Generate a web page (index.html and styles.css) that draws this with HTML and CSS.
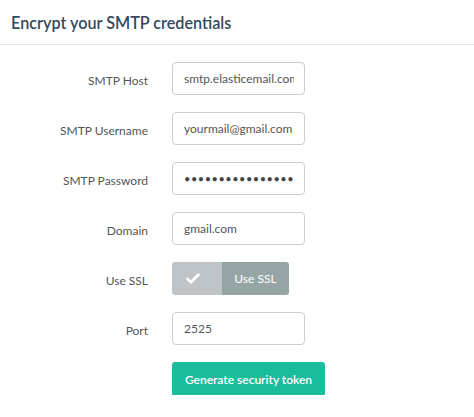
FILE: index.html
```html
<!DOCTYPE html>
<html>
<head>
<meta charset="utf-8">
<link rel="stylesheet" href="styles.css">
</head>
<body>
<div class="header"><h1 class="title">Encrypt your SMTP credentials</h1></div>
<form class="form">
  <div class="row"><label class="label">SMTP Host</label><div class="input"><span class="val">smtp.elasticemail.com</span></div></div>
  <div class="row"><label class="label">SMTP Username</label><div class="input"><span class="val">yourmail@gmail.com</span></div></div>
  <div class="row"><label class="label">SMTP Password</label><div class="input"><span class="val dots">••••••••••••••••</span></div></div>
  <div class="row"><label class="label">Domain</label><div class="input"><span class="val">gmail.com</span></div></div>
  <div class="row"><label class="label">Use SSL</label>
    <div class="toggle">
      <span class="tog-check"><svg width="14" height="11" viewBox="0 0 14 11"><path d="M1.6 6 L5 9.2 L12.4 1.8" fill="none" stroke="#fff" stroke-width="2.8" stroke-linecap="round" stroke-linejoin="round"/></svg></span>
      <span class="tog-text">Use SSL</span>
    </div>
  </div>
  <div class="row"><label class="label">Port</label><div class="input"><span class="val">2525</span></div></div>
  <div class="row"><span class="label"></span><div class="btn">Generate security token</div></div>
</form>
</body>
</html>
```
FILE: styles.css
```css
html, body { margin: 0; padding: 0; background: #fff; }
body { font-family: Lato, "Open Sans", sans-serif; color: #555; }
.header { height: 44px; border-bottom: 1px solid #e6e6e6; display: flex; align-items: center; padding-left: 11px; }
.title { margin: 0; font-size: 16.2px; font-weight: 600; color: #34495e; padding-top: 1px; }
.form { padding-top: 17px; display: flex; flex-direction: column; gap: 17px; }
.row { display: flex; align-items: center; height: 33px; }
.label { width: 172px; text-align: right; font-size: 12px; color: #555; padding-right: 24px; box-sizing: border-box; flex: none; padding-top: 3px; }
.input { width: 133px; height: 33px; box-sizing: border-box; border: 1px solid #ccc; border-radius: 4px; padding: 0 10px 0 11px; display: flex; }
.val { display: block; width: 100%; overflow: hidden; white-space: nowrap; font-size: 12px; line-height: 31px; color: #555; }
.dots { letter-spacing: 0.5px; font-size: 11px; color: #444; }
.toggle { display: flex; width: 117px; height: 33px; border-radius: 3px; overflow: hidden; }
.tog-check { width: 50px; padding-right: 8px; box-sizing: border-box; background: #bdc3c7; display: flex; align-items: center; justify-content: center; }
.tog-text { flex: 1; background: #95a5a6; color: #fff; font-size: 12px; display: flex; align-items: center; justify-content: center; }
.btn { margin-top: 1px; width: 153px; height: 34px; background: #1abc9c; border-radius: 3px; color: #fff; font-size: 12px; font-weight: 600; display: flex; align-items: center; justify-content: center; }
```
